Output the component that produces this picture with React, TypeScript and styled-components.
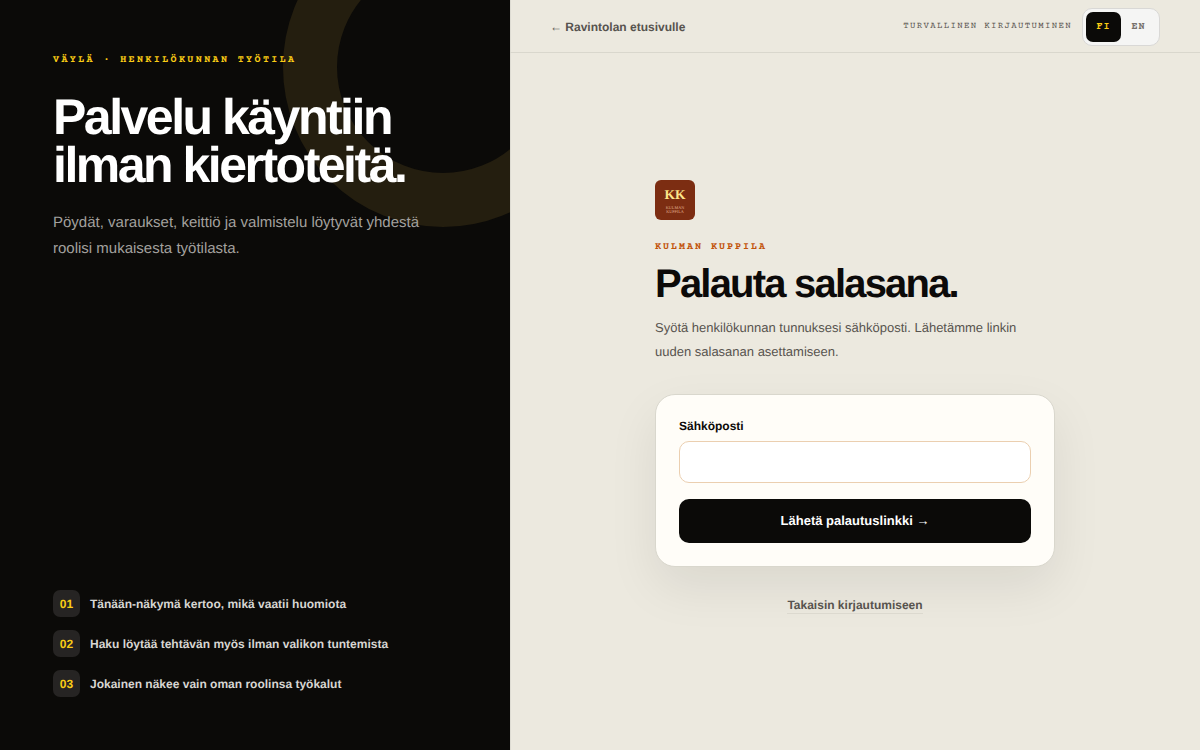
import React, { useState } from 'react';
import styled, { createGlobalStyle } from 'styled-components';

const sans = '"Liberation Sans", Arial, sans-serif';
const mono = '"Courier Prime", "Courier New", "Liberation Mono", monospace';

const GlobalStyle = createGlobalStyle`
  *, *::before, *::after { box-sizing: border-box; }
  body {
    margin: 0;
    background: #ece9df;
    color: #0c0a09;
    font-family: ${sans};
    text-rendering: geometricPrecision;
  }
  h1, h2, p, ol { margin: 0; padding: 0; font-weight: inherit; }
`;

const Page = styled.div`
  display: grid;
  grid-template-columns: 42.5% 1fr;
  min-height: 100vh;
`;

const Story = styled.aside`
  position: relative;
  overflow: hidden;
  display: flex;
  flex-direction: column;
  justify-content: space-between;
  gap: 48px;
  padding: 53px;
  background: #0b0a08;
  color: #fff;
`;

const Ring = styled.div`
  position: absolute;
  top: -93px;
  right: -93px;
  width: 320px;
  height: 320px;
  border: 54px solid #241e0f;
  border-radius: 50%;
`;

const StoryIntro = styled.div`
  position: relative;
`;

const Eyebrow = styled.p<{ $tone: string; $tracking: string }>`
  font: 700 10px/16px ${mono};
  letter-spacing: ${(p) => p.$tracking};
  text-transform: uppercase;
  color: ${(p) => p.$tone};
`;

const StoryTitle = styled.h2`
  margin-top: 24px;
  font-size: 50px;
  font-weight: 700;
  line-height: 48px;
  letter-spacing: -0.05em;
`;

const StoryText = styled.p`
  max-width: 380px;
  margin-top: 21px;
  font-size: 15px;
  line-height: 26px;
  color: #a3a19e;
`;

const Points = styled.ol`
  position: relative;
  display: grid;
  gap: 13px;
  list-style: none;
`;

const Point = styled.li`
  display: flex;
  align-items: center;
  gap: 10px;
  font-size: 12px;
  font-weight: 700;
  line-height: 18px;
  color: #d8d6d2;
`;

const PointNumber = styled.span`
  display: grid;
  place-items: center;
  width: 27px;
  height: 27px;
  border-radius: 7px;
  background: #262423;
  color: #facc15;
`;

const Workspace = styled.div`
  display: flex;
  flex-direction: column;
  box-shadow: inset 1px 0 #dedcd3;
`;

const TopBar = styled.header`
  display: flex;
  align-items: center;
  justify-content: space-between;
  gap: 20px;
  padding: 8px 40px 6px;
  border-bottom: 1px solid #d9d7cd;
`;

const TextLink = styled.a<{ $underlined?: boolean }>`
  font-size: 12px;
  font-weight: 700;
  line-height: 16px;
  color: #57534e;
  text-decoration: none;
  border-bottom: ${(p) => (p.$underlined ? '1px solid #dcd9cf' : '0')};
`;

const Arrow = styled.span`
  font-family: "Liberation Serif", serif;
  font-weight: 400;
`;

const TopBarEnd = styled.div`
  display: flex;
  align-items: center;
  gap: 10px;
`;

const SecureNote = styled.span`
  font: 400 9px/12px ${mono};
  letter-spacing: 0.15em;
  text-transform: uppercase;
  color: #57534e;
`;

const LanguageSwitch = styled.div`
  display: flex;
  padding: 3px;
  border: 1px solid #d9d8d6;
  border-radius: 10px;
  background: #f5f5f4;
`;

const LanguageButton = styled.button`
  width: 35px;
  height: 30px;
  padding: 0;
  border: 0;
  border-radius: 7px;
  background: transparent;
  font: 700 10px/12px ${mono};
  letter-spacing: 1px;
  color: #78716c;
  cursor: pointer;

  &[aria-pressed='true'] {
    background: #0b0a08;
    color: #facc15;
  }
`;

const Main = styled.main`
  flex: 1;
  display: flex;
  align-items: center;
  justify-content: center;
  padding: 40px 40px 50px;
`;

const Panel = styled.div`
  display: flex;
  flex-direction: column;
  width: 100%;
  max-width: 400px;
`;

const Logo = styled.svg`
  display: block;
  width: 40px;
  height: 40px;
  margin-bottom: 20px;
`;

const Title = styled.h1`
  margin-top: 8px;
  font-size: 40px;
  font-weight: 700;
  line-height: 40px;
  letter-spacing: -0.045em;
`;

const Lead = styled.p`
  margin-top: 12px;
  font-size: 13px;
  line-height: 24px;
  color: #57534e;
`;

const Card = styled.form`
  display: flex;
  flex-direction: column;
  margin-top: 30px;
  padding: 23px;
  border: 1px solid #d9d7cd;
  border-radius: 20px;
  background: #fffdf8;
  box-shadow: 0 20px 50px rgba(12, 10, 9, 0.08);
`;

const Label = styled.label`
  font-size: 12px;
  font-weight: 700;
  line-height: 17px;
`;

const Field = styled.input`
  width: 100%;
  height: 42px;
  margin-top: 6px;
  padding: 0 13px;
  border: 1px solid #ebcfb0;
  border-radius: 10px;
  background: #fff;
  font: 400 13px/20px ${sans};
  color: inherit;
`;

const Submit = styled.button`
  height: 44px;
  margin-top: 16px;
  border: 0;
  border-radius: 10px;
  background: #0b0a08;
  font: 700 13px/20px ${sans};
  text-rendering: inherit;
  color: #fff;
  cursor: pointer;
`;

const PanelFooter = styled.div`
  display: flex;
  justify-content: center;
  margin-top: 30px;
`;

const points = [
  'Tänään-näkymä kertoo, mikä vaatii huomiota',
  'Haku löytää tehtävän myös ilman valikon tuntemista',
  'Jokainen näkee vain oman roolinsa työkalut',
];

function BrandLogo() {
  return (
    <Logo viewBox="0 0 40 40" role="img" aria-label="Kulman Kuppila">
      <rect width="40" height="40" rx="6" fill="#7c2d12" />
      <g textAnchor="middle" fontFamily='"Liberation Serif", serif'>
        <text x="20" y="19" fontSize="13.5" fontWeight="700" fill="#fde68a">KK</text>
        <g fontSize="4.2" fill="#e0b090">
          <text x="20" y="28.5">KULMAN</text>
          <text x="20" y="33">KUPPILA</text>
        </g>
      </g>
    </Logo>
  );
}

export default function App() {
  const [language, setLanguage] = useState('FI');
  return (
    <>
      <GlobalStyle />
      <Page>
        <Story>
          <Ring />
          <StoryIntro>
            <Eyebrow $tone="#facc15" $tracking="0.24em">Väylä · Henkilökunnan työtila</Eyebrow>
            <StoryTitle>Palvelu käyntiin<br />ilman kiertoteitä.</StoryTitle>
            <StoryText>Pöydät, varaukset, keittiö ja valmistelu löytyvät yhdestä roolisi mukaisesta työtilasta.</StoryText>
          </StoryIntro>
          <Points>
            {points.map((text, i) => (
              <Point key={text}>
                <PointNumber>{`0${i + 1}`}</PointNumber>
                {text}
              </Point>
            ))}
          </Points>
        </Story>
        <Workspace>
          <TopBar>
            <TextLink href="#etusivu"><Arrow>←</Arrow> Ravintolan etusivulle</TextLink>
            <TopBarEnd>
              <SecureNote>Turvallinen kirjautuminen</SecureNote>
              <LanguageSwitch role="group" aria-label="Kieli">
                {['FI', 'EN'].map((code) => (
                  <LanguageButton
                    key={code}
                    type="button"
                    aria-pressed={language === code}
                    onClick={() => setLanguage(code)}
                  >
                    {code}
                  </LanguageButton>
                ))}
              </LanguageSwitch>
            </TopBarEnd>
          </TopBar>
          <Main>
            <Panel>
              <BrandLogo />
              <Eyebrow $tone="#c2540a" $tracking="0.2em">Kulman Kuppila</Eyebrow>
              <Title>Palauta salasana.</Title>
              <Lead>Syötä henkilökunnan tunnuksesi sähköposti. Lähetämme linkin uuden salasanan asettamiseen.</Lead>
              <Card onSubmit={(e) => e.preventDefault()}>
                <Label htmlFor="email">Sähköposti</Label>
                <Field id="email" type="email" autoComplete="email" />
                <Submit type="submit">Lähetä palautuslinkki <Arrow>→</Arrow></Submit>
              </Card>
              <PanelFooter>
                <TextLink href="#kirjaudu" $underlined>Takaisin kirjautumiseen</TextLink>
              </PanelFooter>
            </Panel>
          </Main>
        </Workspace>
      </Page>
    </>
  );
}
